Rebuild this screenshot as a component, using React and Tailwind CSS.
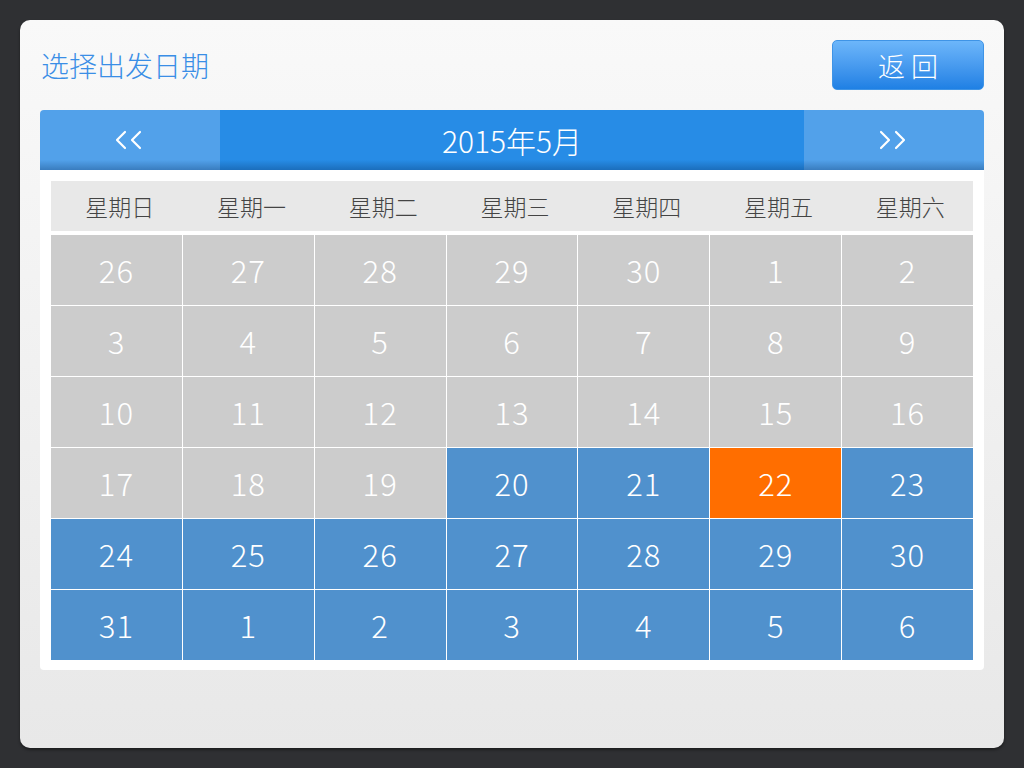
import React from "react";

const weekdays = ["星期日", "星期一", "星期二", "星期三", "星期四", "星期五", "星期六"];

const days = [
  [26, "g"], [27, "g"], [28, "g"], [29, "g"], [30, "g"], [1, "g"], [2, "g"],
  [3, "g"], [4, "g"], [5, "g"], [6, "g"], [7, "g"], [8, "g"], [9, "g"],
  [10, "g"], [11, "g"], [12, "g"], [13, "g"], [14, "g"], [15, "g"], [16, "g"],
  [17, "g"], [18, "g"], [19, "g"], [20, "b"], [21, "b"], [22, "o"], [23, "b"],
  [24, "b"], [25, "b"], [26, "b"], [27, "b"], [28, "b"], [29, "b"], [30, "b"],
  [31, "b"], [1, "b"], [2, "b"], [3, "b"], [4, "b"], [5, "b"], [6, "b"],
];

const font = { fontFamily: '"Noto Sans CJK SC", "Noto Sans", sans-serif' };

function Chevrons({ dir }) {
  const d = dir === "left" ? "M10 2 L2 10 L10 18" : "M2 2 L10 10 L2 18";
  return (
    <svg width="30" height="20" viewBox="0 0 30 20" fill="none" stroke="white" strokeWidth="2.2" strokeLinecap="round" strokeLinejoin="round">
      <path d={d} />
      <path d={d} transform="translate(15 0)" />
    </svg>
  );
}

export default function App() {
  return (
    <div className="w-[1024px] h-[768px] bg-[#2f3033] p-5" style={font}>
      <div className="w-[984px] h-[728px] rounded-[10px] bg-gradient-to-b from-[#f9f9f9] to-[#e8e8e8] shadow-[0_2px_3px_rgba(0,0,0,0.4)] px-5 pt-5">
        <div className="flex items-center justify-between h-[50px]">
          <div className="text-[28px] leading-none text-[#3a8ee6] pl-px font-light">选择出发日期</div>
          <button className="w-[152px] h-[50px] rounded-[5px] bg-gradient-to-b from-[#6cb6fa] to-[#1e80e4] text-white text-[27px] leading-none border border-[#3f94e6] font-light">
            返 回
          </button>
        </div>
        <div className="mt-5 flex h-[60px] rounded-t-[4px] overflow-hidden text-white relative">
          <div className="w-[180px] bg-[#52a1ea] flex items-center justify-center"><Chevrons dir="left" /></div>
          <div className="flex-1 bg-[#278ce6] flex items-center justify-center text-[30px] font-light">2015年5月</div>
          <div className="w-[180px] bg-[#52a1ea] flex items-center justify-center"><Chevrons dir="right" /></div>
          <div className="absolute left-0 right-0 bottom-0 h-[10px] bg-gradient-to-b from-transparent to-[rgba(0,40,90,0.3)]"></div>
        </div>
        <div className="bg-white rounded-b-[4px] px-[11px] pt-[11px] pb-[10px]">
          <div className="grid grid-cols-7 h-[50px] bg-[#e8e8e8] items-center">
            {weekdays.map((w) => (
              <div key={w} className="text-center text-[23px] text-[#444] pl-[6px] font-light">{w}</div>
            ))}
          </div>
          <div className="mt-1 grid grid-cols-7 gap-px">
            {days.map(([d, t], i) => (
              <div
                key={i}
                className={
                  "h-[70px] flex items-center justify-center text-[31px] font-light tracking-[1px] text-white " +
                  (t === "g" ? "bg-[#cccccc]" : t === "o" ? "bg-[#ff6e00]" : "bg-[#5091cd]")
                }
              >
                {d}
              </div>
            ))}
          </div>
        </div>
      </div>
    </div>
  );
}
